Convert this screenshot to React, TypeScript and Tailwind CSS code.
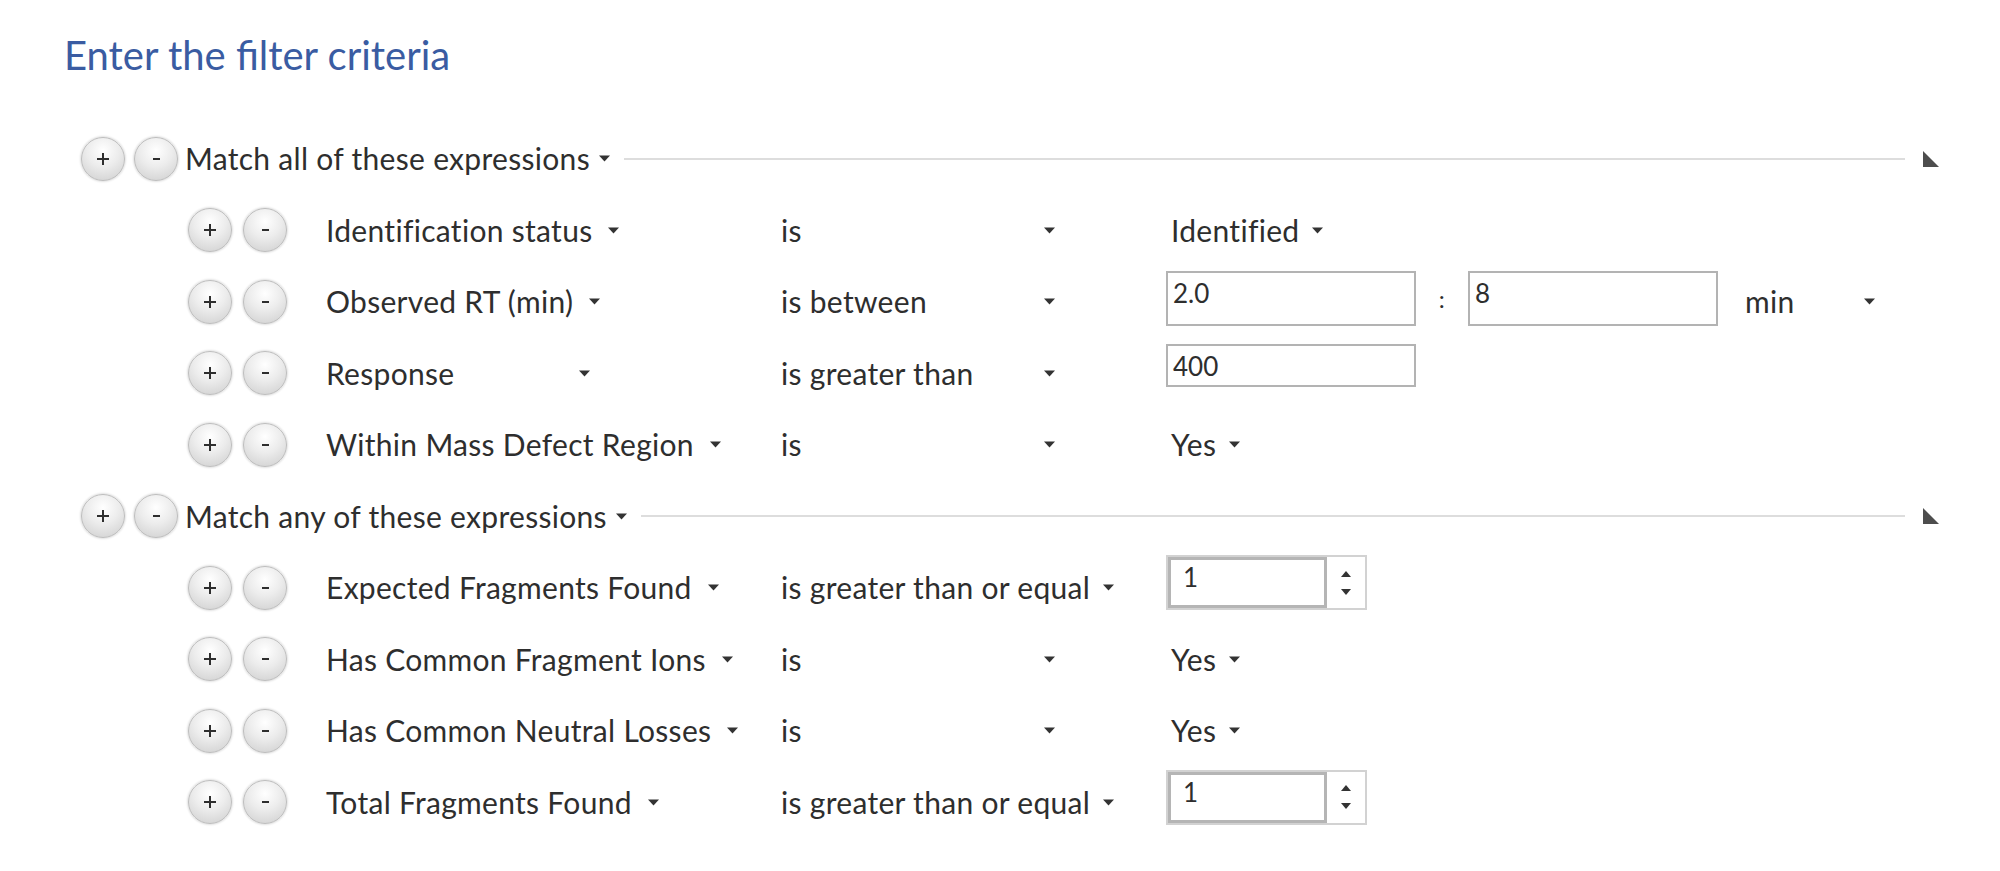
import type { ReactNode } from 'react';

type Value =
  | { kind: 'dropdown'; text: string }
  | { kind: 'range'; from: string; to: string; unit: string }
  | { kind: 'text'; text: string }
  | { kind: 'spin'; text: string };

type Row =
  | { kind: 'group'; label: string }
  | { kind: 'rule'; field: string; op: string; value: Value };

const rows: Row[] = [
  { kind: 'group', label: 'Match all of these expressions' },
  { kind: 'rule', field: 'Identification status', op: 'is', value: { kind: 'dropdown', text: 'Identified' } },
  { kind: 'rule', field: 'Observed RT (min)', op: 'is between', value: { kind: 'range', from: '2.0', to: '8', unit: 'min' } },
  { kind: 'rule', field: 'Response', op: 'is greater than', value: { kind: 'text', text: '400' } },
  { kind: 'rule', field: 'Within Mass Defect Region', op: 'is', value: { kind: 'dropdown', text: 'Yes' } },
  { kind: 'group', label: 'Match any of these expressions' },
  { kind: 'rule', field: 'Expected Fragments Found', op: 'is greater than or equal', value: { kind: 'spin', text: '1' } },
  { kind: 'rule', field: 'Has Common Fragment Ions', op: 'is', value: { kind: 'dropdown', text: 'Yes' } },
  { kind: 'rule', field: 'Has Common Neutral Losses', op: 'is', value: { kind: 'dropdown', text: 'Yes' } },
  { kind: 'rule', field: 'Total Fragments Found', op: 'is greater than or equal', value: { kind: 'spin', text: '1' } },
];

function Caret({ className = '' }: { className?: string }) {
  return (
    <svg width="11" height="7" viewBox="0 0 11 7" className={`shrink-0 ${className}`}>
      <path d="M0 0.5 H11 L5.5 6.5 Z" fill="#333333" />
    </svg>
  );
}

function RoundButton({ sign }: { sign: '+' | '-' }) {
  return (
    <div className="flex h-[44px] w-[44px] shrink-0 items-center justify-center rounded-full border border-[#bdbdbd] bg-[radial-gradient(circle_at_50%_30%,#ffffff_0%,#ececec_45%,#cdcdcd_100%)] shadow-[0_0_2px_1px_rgba(0,0,0,0.12)]">
      {sign === '+' ? (
        <svg width="12" height="12" viewBox="0 0 12 12">
          <rect x="0" y="5" width="12" height="2" fill="#2e2e2e" />
          <rect x="5" y="0" width="2" height="12" fill="#2e2e2e" />
        </svg>
      ) : (
        <svg width="7" height="2" viewBox="0 0 7 2">
          <rect x="0" y="0" width="7" height="2" fill="#2e2e2e" />
        </svg>
      )}
    </div>
  );
}

function Box({ children, h }: { children: ReactNode; h: string }) {
  return (
    <div className={`w-[250px] border-2 border-[#b3b3b3] bg-white pl-[5px] pt-[5px] text-[26px] leading-[1.2] tracking-normal ${h}`}>
      {children}
    </div>
  );
}

function SpinBox({ text }: { text: string }) {
  return (
    <div className="flex h-[55px] w-[201px] border-2 border-[#d2d2d2] bg-white">
      <div className="flex-1 border-[3px] border-[#b5b5b5] pl-[12px] pt-[2px] text-[26px] leading-[1.2] tracking-normal">{text}</div>
      <div className="flex w-[38px] flex-col items-center justify-center gap-[12px]">
        <svg width="10" height="6" viewBox="0 0 10 6">
          <path d="M0 6 H10 L5 0 Z" fill="#333333" />
        </svg>
        <svg width="10" height="6" viewBox="0 0 10 6">
          <path d="M0 0 H10 L5 6 Z" fill="#333333" />
        </svg>
      </div>
    </div>
  );
}

function ValueCell({ value }: { value: Value }) {
  switch (value.kind) {
    case 'dropdown':
      return (
        <div className="flex items-center pl-[5px]">
          <span>{value.text}</span>
          <Caret className="ml-[13px]" />
        </div>
      );
    case 'range':
      return (
        <div className="flex h-full items-center">
          <div className="mt-[5px] flex items-center self-start">
            <Box h="h-[55px]">{value.from}</Box>
            <span className="w-[52px] text-center text-[24px]">:</span>
            <Box h="h-[55px]">{value.to}</Box>
          </div>
          <span className="ml-[27px] w-[119px]">{value.unit}</span>
          <Caret />
        </div>
      );
    case 'text':
      return (
        <div className="mt-[6px] self-start">
          <Box h="h-[43px]">{value.text}</Box>
        </div>
      );
    case 'spin':
      return (
        <div className="mt-[3px] self-start">
          <SpinBox text={value.text} />
        </div>
      );
  }
}

function GroupRow({ label }: { label: string }) {
  return (
    <div className="flex h-[71.5px] items-center pl-[81px] pr-[61px]">
      <div className="flex gap-[9px]">
        <RoundButton sign="+" />
        <RoundButton sign="-" />
      </div>
      <span className="ml-[7px] whitespace-nowrap">{label}</span>
      <Caret className="ml-[9px]" />
      <div className="ml-[14px] h-[2px] flex-1 bg-[#dddddd]" />
      <svg width="16" height="16" viewBox="0 0 16 16" className="ml-[18px] shrink-0">
        <path d="M0 0 L16 16 H0 Z" fill="#4d4d4d" />
      </svg>
    </div>
  );
}

function RuleRow({ field, op, value }: { field: string; op: string; value: Value }) {
  return (
    <div className="flex h-[71.5px] items-center pl-[188px]">
      <div className="flex gap-[11px]">
        <RoundButton sign="+" />
        <RoundButton sign="-" />
      </div>
      <div className="ml-[39px] flex w-[455px] items-center">
        <span className="min-w-[237px] whitespace-nowrap">{field}</span>
        <Caret className="ml-[16px]" />
      </div>
      <div className="flex w-[385px] items-center">
        <span className="min-w-[250px] whitespace-nowrap">{op}</span>
        <Caret className="ml-[13px]" />
      </div>
      <div className="flex h-full items-center">
        <ValueCell value={value} />
      </div>
    </div>
  );
}

export default function App() {
  return (
    <div className="min-h-screen bg-white font-[family-name:Lato,sans-serif] text-[30px] tracking-[0.3px] text-[#2e2e2e]">
      <div className="pt-[31px]">
        <h1 className="pl-[64px] text-[40px] leading-[48px] font-normal tracking-normal text-[#3a5ca2]">Enter the filter criteria</h1>
        <div className="mt-[44px]">
          {rows.map((row, i) =>
            row.kind === 'group' ? (
              <GroupRow key={i} label={row.label} />
            ) : (
              <RuleRow key={i} field={row.field} op={row.op} value={row.value} />
            ),
          )}
        </div>
      </div>
    </div>
  );
}
